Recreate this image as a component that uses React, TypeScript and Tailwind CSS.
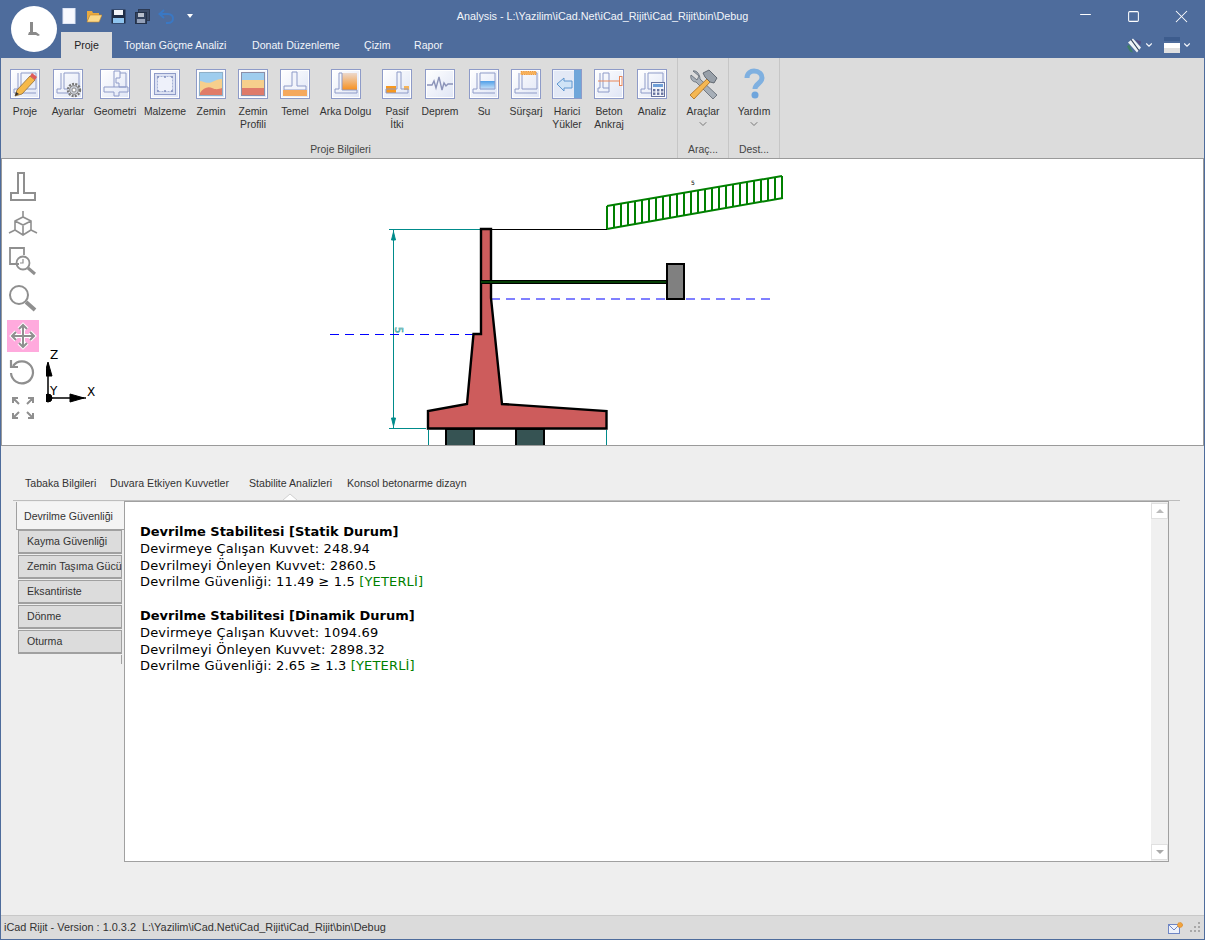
import React from 'react';
import { ChevronDown, Minus, Square, X } from 'lucide-react';

const line = '#8e9bc8';
const Wall = () => <path d="M7 3v16H3v4h22M10 3v16h15M10 3h15v16" fill="none" stroke={line} />;

const RibbonIcon: React.FC<{ children: React.ReactNode; tint?: boolean }> = ({ children, tint }) => (
  <div
    className={
      tint
        ? 'h-[30px] w-[30px] border border-[#8e9bc8] bg-[#e3e9f6] shadow-[inset_0_0_0_1px_#f4f7fd]'
        : 'h-[30px] w-[30px] border border-[#8e9bc8] bg-linear-to-br from-white to-[#dfe5f5] shadow-[inset_0_0_0_1px_#ffffff]'
    }
  >
    <svg viewBox="0 0 28 28" className="h-[28px] w-[28px]">
      {children}
    </svg>
  </div>
);

const ribbonItems = [
  {
    w: 'w-[42px]',
    label: ['Proje'],
    icon: (
      <>
        <Wall />
        <path d="M4 26l2-6L19 6l5 4-13 14z" fill="#f6b94a" stroke="#8b6a3a" strokeWidth="0.8" />
        <path d="M19 6l2-3 5 4-2 3z" fill="#df5a5a" />
        <path d="M4 26l1-4 3 2z" fill="#333" />
      </>
    ),
  },
  {
    w: 'w-[44px]',
    label: ['Ayarlar'],
    icon: (
      <>
        <Wall />
        <circle cx="20" cy="20" r="6" fill="#eef0f6" stroke="#777" strokeWidth="2.4" strokeDasharray="2 1.2" />
        <circle cx="20" cy="20" r="4.4" fill="#c9cdd6" stroke="#777" strokeWidth="0.8" />
        <circle cx="20" cy="20" r="2" fill="#fff" stroke="#777" strokeWidth="0.8" />
      </>
    ),
  },
  {
    w: 'w-[50px]',
    label: ['Geometri'],
    icon: (
      <path
        d="M13 1v16H3v5h10v4h5v-4h9M13 1h6v7h-4v5h3v4h-5M19 3h6v14h-7M18 17h9v5"
        fill="none"
        stroke={line}
      />
    ),
  },
  {
    w: 'w-[50px]',
    label: ['Malzeme'],
    icon: (
      <>
        <rect x="3.5" y="3.5" width="21" height="21" fill="#dbe1f2" stroke={line} />
        <rect x="6.5" y="6.5" width="15" height="15" fill="#eef1fa" stroke="#a7b2d6" strokeDasharray="2 1" />
        {[7, 14, 21].map((x) => (
          <circle key={x} cx={x} cy="7" r="1" fill="#7f8dbd" />
        ))}
        {[7, 14, 21].map((x) => (
          <circle key={x} cx={x} cy="21" r="1" fill="#7f8dbd" />
        ))}
      </>
    ),
  },
  {
    w: 'w-[42px]',
    label: ['Zemin'],
    icon: (
      <>
        <rect x="2.5" y="2.5" width="23" height="23" fill="#9fcdee" stroke="#8fb0c8" />
        <path d="M3 11c5 1 8 3 12 1s7-3 10-3v16H3z" fill="#f6cf8c" />
        <path d="M3 23c3-5 8-7 12-5s7 1 10 0v7H3z" fill="#e07c68" />
      </>
    ),
  },
  {
    w: 'w-[42px]',
    label: ['Zemin', 'Profili'],
    icon: (
      <>
        <rect x="3" y="3" width="22" height="7" fill="#9fcdee" />
        <rect x="3" y="10" width="22" height="8" fill="#f6cf8c" />
        <rect x="3" y="18" width="22" height="7" fill="#df7a6a" />
        <rect x="2.5" y="2.5" width="23" height="23" fill="none" stroke="#8b8fa8" />
      </>
    ),
  },
  {
    w: 'w-[42px]',
    label: ['Temel'],
    icon: (
      <>
        <path d="M11 2v14H3v4h22v-4h-9V2z" fill="#f2f4fb" stroke={line} />
        <rect x="2" y="20" width="24" height="6" fill="#f5a95e" />
      </>
    ),
  },
  {
    w: 'w-[59px]',
    label: ['Arka Dolgu'],
    icon: (
      <>
        <defs>
          <linearGradient id="fillOrange" x1="0" y1="0" x2="0" y2="1">
            <stop offset="0" stopColor="#ecd9cd" />
            <stop offset="1" stopColor="#f7901e" />
          </linearGradient>
        </defs>
        <rect x="10" y="3" width="15" height="17" fill="url(#fillOrange)" />
        <path d="M7 3v16H3v4h22v-3H10V3z" fill="none" stroke={line} />
      </>
    ),
  },
  {
    w: 'w-[44px]',
    label: ['Pasif', 'İtki'],
    icon: (
      <>
        <rect x="3" y="16" width="10" height="7" fill="#f7981f" />
        <rect x="21" y="16" width="5" height="4" fill="#f7b55a" />
        <path d="M14 2v17H3v4h22v-4h-7V2z" fill="none" stroke={line} />
      </>
    ),
  },
  {
    w: 'w-[42px]',
    label: ['Deprem'],
    icon: <path d="M1 15h5l2-4 2 7 3-11 3 13 2-7 2 3 2-2h5" fill="none" stroke="#8b93b8" strokeWidth="1.4" />,
  },
  {
    w: 'w-[46px]',
    label: ['Su'],
    icon: (
      <>
        <defs>
          <linearGradient id="fillWater" x1="0" y1="0" x2="0" y2="1">
            <stop offset="0" stopColor="#4f9fe8" />
            <stop offset="1" stopColor="#d7e9fa" />
          </linearGradient>
        </defs>
        <rect x="10" y="11" width="15" height="9" fill="url(#fillWater)" />
        <Wall />
      </>
    ),
  },
  {
    w: 'w-[38px]',
    label: ['Sürşarj'],
    icon: (
      <>
        <Wall />
        <rect x="9" y="1.5" width="15" height="3" fill="#f7b15a" stroke="#f09a3a" strokeDasharray="1.4 0.8" />
      </>
    ),
  },
  {
    w: 'w-[44px]',
    label: ['Harici', 'Yükler'],
    icon: (
      <>
        <rect x="21" y="0" width="7" height="28" fill="#6fa6da" />
        <path d="M4 14l7-6v3h8v7h-8v3z" fill="#cfe3f6" stroke="#5f96cf" />
      </>
    ),
  },
  {
    w: 'w-[40px]',
    label: ['Beton', 'Ankraj'],
    icon: (
      <>
        <path d="M5 3v15H3v4h11v-4M8 3v15h6M8 3h6v15" fill="none" stroke={line} />
        <path d="M3 11h22" stroke="#e8875a" />
        <rect x="24.5" y="6.5" width="2.5" height="9" fill="#fff" stroke="#e8875a" />
      </>
    ),
  },
  {
    w: 'w-[46px]',
    label: ['Analiz'],
    icon: (
      <>
        <Wall />
        <rect x="13.5" y="12.5" width="13" height="14" fill="#f2f4fa" stroke="#67739f" />
        <rect x="15" y="14" width="10" height="3" fill="#6f9fd8" />
        {[15, 19, 23].map((x) =>
          [19, 22.5].map((y) => <rect key={`${x}-${y}`} x={x} y={y} width="2.4" height="2.4" fill="#67739f" />),
        )}
      </>
    ),
  },
];

const headerTabs = ['Toptan Göçme Analizi', 'Donatı Düzenleme', 'Çizim', 'Rapor'];
const headerTabWidths = ['w-[128px]', 'w-[112px]', 'w-[50px]', 'w-[50px]'];

const resultTabs = [
  { label: 'Tabaka Bilgileri', w: 'w-[85px]' },
  { label: 'Duvara Etkiyen Kuvvetler', w: 'w-[139px]' },
  { label: 'Stabilite Analizleri', w: 'w-[98px]' },
  { label: 'Konsol betonarme dizayn', w: 'w-[140px]' },
];

const sideTabs = ['Kayma Güvenliği', 'Zemin Taşıma Gücü', 'Eksantiriste', 'Dönme', 'Oturma'];

const results = [
  {
    title: 'Devrilme Stabilitesi [Statik Durum]',
    lines: ['Devirmeye Çalışan Kuvvet: 248.94', 'Devrilmeyi Önleyen Kuvvet: 2860.5'],
    safety: 'Devrilme Güvenliği: 11.49 ≥ 1.5',
  },
  {
    title: 'Devrilme Stabilitesi [Dinamik Durum]',
    lines: ['Devirmeye Çalışan Kuvvet: 1094.69', 'Devrilmeyi Önleyen Kuvvet: 2898.32'],
    safety: 'Devrilme Güvenliği: 2.65 ≥ 1.3',
  },
];

const QuickAccess = () => (
  <div className="flex h-[32px] items-center pl-[62px]">
    <svg width="14" height="16" viewBox="0 0 14 16" className="mr-[10px]">
      <rect x="1" y="0.5" width="12" height="15" fill="#f8f9ff" stroke="#dfe6f5" />
    </svg>
    <svg width="16" height="14" viewBox="0 0 16 14" className="mr-[9px]">
      <path d="M1 2h5l1 2h6v2H4L1 12z" fill="#e9a93f" />
      <path d="M1 13l3-7h12l-3 7z" fill="#fbd98a" stroke="#c98a2a" strokeWidth="0.6" />
    </svg>
    <svg width="15" height="15" viewBox="0 0 15 15" className="mr-[9px]">
      <rect x="0.5" y="0.5" width="14" height="14" fill="#1f2d46" />
      <rect x="3" y="1" width="9" height="5" fill="#f2f4f8" />
      <rect x="2" y="9" width="11" height="5" fill="#8fc4ee" />
    </svg>
    <svg width="15" height="15" viewBox="0 0 15 15" className="mr-[8px]">
      <rect x="3.5" y="0.5" width="11" height="11" fill="#3c4c68" stroke="#2c3a54" />
      <rect x="0.5" y="3.5" width="11" height="11" fill="#33435f" stroke="#243249" />
      <rect x="3" y="4" width="6" height="4" fill="#b8bfcb" />
      <rect x="2" y="10" width="8" height="4" fill="#93a0b8" />
    </svg>
    <svg width="17" height="15" viewBox="0 0 17 15" className="mr-[12px]">
      <path d="M6 1L1.5 5 6 9M2 5h8c3 0 5 2 5 4.500S13 14 10 14H8" fill="none" stroke="#3a78c4" strokeWidth="2" />
    </svg>
    <svg width="6" height="4" viewBox="0 0 6 4">
      <path d="M0 0h6L3 4z" fill="#fff" />
    </svg>
  </div>
);

const Header = () => (
  <header className="relative h-[58px] shrink-0 text-[10.6px] text-[#f2f5fa]">
    <div className="absolute left-[11px] top-[6px] flex h-[46px] w-[46px] items-center justify-center rounded-full bg-white">
      <svg width="14" height="16" viewBox="0 0 14 16">
        <path d="M3 1h3v10h3l4 3-2 1-2-1H1l1-3h1z" fill="#8a8a8a" />
      </svg>
    </div>
    <div className="grid h-[32px] grid-cols-[1fr_auto_1fr] items-center">
      <QuickAccess />
      <span className="pt-[1px] text-[10.8px]">Analysis - L:\Yazilim\iCad.Net\iCad_Rijit\iCad_Rijit\bin\Debug</span>
      <div className="flex justify-end text-white">
        <div className="flex w-[48px] justify-center">
          <Minus size={17} strokeWidth={1.4} />
        </div>
        <div className="flex w-[48px] items-center justify-center">
          <Square size={13} strokeWidth={1.9} />
        </div>
        <div className="flex w-[48px] justify-center">
          <X size={21} strokeWidth={1.2} />
        </div>
      </div>
    </div>
    <div className="flex h-[26px] items-stretch">
      <div className="ml-[61px] flex w-[51px] items-center justify-center bg-[#dcdcdc] pt-[1px] text-[#222]">Proje</div>
      <div className="flex flex-1 items-center pl-[12px] pt-[1px]">
        {headerTabs.map((t, i) => (
          <span key={t} className={headerTabWidths[i]}>
            {t}
          </span>
        ))}
      </div>
      <div className="flex items-center pr-[13px]">
        <svg width="16" height="17" viewBox="0 0 16 16">
          <path d="M2 5l5-4 8 9-4 5z" fill="#eef1f6" />
          <path d="M9 2l5 6 1-4z" fill="#544a80" />
          <path d="M1 9l3 5 3 1-4-8z" fill="#3f7f66" />
          <path d="M5 2l8 11" stroke="#2f3c58" strokeWidth="1.2" />
        </svg>
        <ChevronDown size={10} strokeWidth={2.6} className="ml-[2px] mr-[10px]" />
        <div className="mr-[2px] flex h-[16px] w-[16px] flex-col">
          <div className="h-[4px] bg-[#3d5c8d]" />
          <div className="h-[2px]" />
          <div className="h-[5px] bg-white" />
          <div className="h-[5px] bg-[#e0e0e0]" />
        </div>
        <ChevronDown size={10} strokeWidth={2.6} />
      </div>
    </div>
  </header>
);

const LargeAction: React.FC<{ label: string; group: string; width: string; children: React.ReactNode }> = ({
  label,
  group,
  width,
  children,
}) => (
  <div className={`${width} flex flex-col items-center border-r border-[#c6c6c6] pt-[10px]`}>
    <svg width="32" height="32" viewBox="0 0 32 32">
      {children}
    </svg>
    <span className="mt-[5px] leading-[13px]">{label}</span>
    <ChevronDown size={12} strokeWidth={2} className="text-[#777]" />
    <span className="mt-auto leading-[17px] text-[#444]">{group}</span>
  </div>
);

const Ribbon = () => (
  <section className="flex h-[100px] shrink-0 bg-[#dcdcdc] text-[10.4px] text-[#333]">
    <div className="flex w-[677px] flex-col border-r border-[#c6c6c6] pl-[3px]">
      <div className="flex flex-1 pt-[11px]">
        {ribbonItems.map((item) => (
          <div key={item.label.join(' ')} className={`${item.w} flex flex-col items-center`}>
            <RibbonIcon tint={item.label[0] === 'Harici'}>{item.icon}</RibbonIcon>
            <div className="mt-[6px] text-center leading-[13px]">
              {item.label.map((l) => (
                <div key={l} className="whitespace-nowrap">
                  {l}
                </div>
              ))}
            </div>
          </div>
        ))}
      </div>
      <div className="text-center leading-[17px] text-[#444]">Proje Bilgileri</div>
    </div>
    <LargeAction label="Araçlar" group="Araç..." width="w-[51px]">
      <path d="M6 3l6 5-2 4-6-5c-1 3 1 7 5 7l17 17 4-4L13 11c0-4-3-9-7-8z" fill="#a7afb8" stroke="#5d6670" strokeWidth="0.8" />
      <path d="M3 27l18-17 3 3L7 31z" fill="#f5b752" stroke="#a86c20" strokeWidth="0.8" />
      <path d="M16 5l6-3 8 8-3 5-4-1-5-5z" fill="#98a0a9" stroke="#4e565f" strokeWidth="0.8" />
    </LargeAction>
    <LargeAction label="Yardım" group="Dest..." width="w-[51px]">
      <path d="M9 10c0-5 4-7 7-7 5 0 8 3 8 7 0 5-7 6-7 11" fill="none" stroke="#7fb0e0" strokeWidth="5" />
      <circle cx="17" cy="27" r="3.500" fill="#6fa5dc" />
    </LargeAction>
  </section>
);

const tool = 'fill-none stroke-[#8f8f8f]';

const CanvasTools = () => (
  <div className="flex w-[44px] shrink-0 flex-col items-center pr-[2px] pt-[12px]">
    <svg width="28" height="32" viewBox="0 0 28 32" className={tool} strokeWidth="2">
      <path d="M9 2h6v20h11v7H2v-7h7z" />
    </svg>
    <svg width="30" height="30" viewBox="0 0 30 30" className={`${tool} mt-[7px]`} strokeWidth="1.6">
      <path d="M15 1v6M7 11l8-4 8 4v9l-8 5-8-5zM7 11l8 4 8-4M15 15v10M7 20l-6 3M23 20l6 3" />
    </svg>
    <svg width="30" height="30" viewBox="0 0 30 30" className={`${tool} mt-[6px]`} strokeWidth="1.8">
      <path d="M11 18H2V2h14v7" />
      <circle cx="15" cy="17" r="6.500" />
      <path d="M15 13v4h-3" strokeWidth="1.2" />
      <path d="M20 22l7 6" strokeWidth="3" />
    </svg>
    <svg width="30" height="30" viewBox="0 0 30 30" className={`${tool} mt-[7px]`} strokeWidth="2">
      <circle cx="11" cy="12" r="9" />
      <path d="M18 19l9 8" strokeWidth="4" />
    </svg>
    <div className="mt-[7px] flex h-[32px] w-[32px] items-center justify-center bg-[#ffaadd]">
      <svg width="28" height="28" viewBox="0 0 28 28" className={tool} strokeWidth="2">
        <path d="M14 3v22M3 14h22M10 7l4-4 4 4M10 21l4 4 4-4M7 10l-4 4 4 4M21 10l4 4-4 4" stroke="#fff" strokeWidth="4" />
        <path d="M14 3v22M3 14h22M10 7l4-4 4 4M10 21l4 4 4-4M7 10l-4 4 4 4M21 10l4 4-4 4" />
      </svg>
    </div>
    <svg width="30" height="30" viewBox="0 0 30 30" className={`${tool} mt-[6px]`} strokeWidth="2.2">
      <path d="M5 8a11 11 0 1 1-2 7" />
      <path d="M3 2v7h7" />
    </svg>
    <svg width="26" height="26" viewBox="0 0 26 26" className={`${tool} mt-[7px]`} strokeWidth="2">
      <path d="M3 3l6 6M3 8V3h5M23 3l-6 6M23 8V3h-5M3 23l6-6M3 18v5h5M23 23l-6-6M23 18v5h-5" />
    </svg>
  </div>
);

// surcharge load, evenly spaced down the slope
const loadBars = Array.from({ length: 26 }, (_, i) => {
  const t = i / 25;
  return { x: 607 + t * 175, top: 206 - t * 30, bottom: 229 - t * 31 };
});

const Drawing = () => (
  // drawn in page coordinates, so the viewBox starts where the svg sits
  <svg viewBox="46 159 1157 286" className="h-[286px] w-[1157px]">
    <g stroke="#008b8b" fill="#008b8b">
      <path d="M389 229.500h92M389 428.500h37M393.500 229v199M428.500 430v15M606.500 430v15" fill="none" />
      <path d="M393.500 232l-2 8h4zM393.500 426l-2-8h4z" />
      <text x="398" y="330" fontSize="10" fill="none" strokeWidth="0.5" transform="rotate(90 398 327)" fontFamily="DejaVu Sans, sans-serif">
        5
      </text>
    </g>
    <path d="M491 229.500h116" stroke="#000" />
    <path d="M491 299h279M330 334.500h143" stroke="#0000ff" strokeDasharray="9 6" />
    <path
      d="M481 229h10v69l11 106 104.500 7v17.500H428V411l39-7 6.500-70H481z"
      fill="#cd5c5c"
      stroke="#000"
      strokeWidth="2.400"
    />
    <rect x="446" y="429" width="28" height="18" fill="#365353" stroke="#000" strokeWidth="2" />
    <rect x="516" y="429" width="28" height="18" fill="#365353" stroke="#000" strokeWidth="2" />
    <path d="M481 282h186" stroke="#000" strokeWidth="4" />
    <path d="M481 282h186" stroke="#0a7a0a" strokeWidth="1" />
    <rect x="667" y="264" width="17" height="35" fill="#808080" stroke="#000" strokeWidth="2" />
    <g stroke="#008000" strokeWidth="2" fill="none">
      <path d="M607 229L783 198M607 206L782 176" />
      {loadBars.map((b) => (
        <path key={b.x} d={`M${b.x} ${b.top}V${b.bottom}`} />
      ))}
    </g>
    <text x="691" y="185" fontSize="6" fill="#000" fontFamily="DejaVu Sans, sans-serif">
      5
    </text>
    <g stroke="#000" fill="#000">
      <path d="M48 398V363M48 398h38" strokeWidth="1.500" />
      <path d="M48 362l-4 14h8zM84 398l-14-4v8z" />
      <circle cx="48" cy="398" r="4" />
    </g>
    <g fontSize="12" fontFamily="DejaVu Sans, sans-serif" fill="#000">
      <text x="50" y="359">Z</text>
      <text x="50" y="395">Y</text>
      <text x="87" y="396">X</text>
    </g>
  </svg>
);

const ResultPanel = () => (
  <div className="flex h-[361px] w-[1045px] border border-[#a0a0a0] bg-white">
    <div className="flex-1 pl-[15px] pt-[22px] font-['DejaVu_Sans',sans-serif] text-[13px] leading-[16.8px] tracking-[0.16px] text-black">
      {results.map((r) => (
        <div key={r.title} className="mb-[16.8px]">
          <div className="font-bold tracking-normal">{r.title}</div>
          {r.lines.map((l) => (
            <div key={l}>{l}</div>
          ))}
          <div>
            {r.safety} <span className="text-[#008000]">[YETERLİ]</span>
          </div>
        </div>
      ))}
    </div>
    <div className="flex w-[17px] flex-col justify-between bg-[#f0f0f0] py-[1px]">
      <div className="flex h-[16px] items-center justify-center border border-[#e0e0e0] bg-white">
        <div className="h-0 w-0 border-x-[4px] border-b-[4px] border-x-transparent border-b-[#bbb]" />
      </div>
      <div className="flex h-[16px] items-center justify-center border border-[#e0e0e0] bg-white">
        <div className="h-0 w-0 border-x-[4px] border-t-[4px] border-x-transparent border-t-[#aaa]" />
      </div>
    </div>
  </div>
);

const Results = () => (
  <section className="flex-1 bg-[#eeeeee] pl-[12px] pr-[24px] pt-[29px] text-[10.6px] text-[#333]">
    <div className="flex h-[26px] items-center border-b border-[#bdbdbd] pb-[7px] pl-[12px]">
      {resultTabs.map((t) => (
        <div key={t.label} className={`${t.w} relative whitespace-nowrap`}>
          {t.label}
          {t.label === 'Stabilite Analizleri' && (
            <svg width="14" height="7" viewBox="0 0 14 7" className="absolute bottom-[-8px] left-[34px]">
              <path d="M0 7l7-6 7 6" fill="#fff" stroke="#cfcfcf" />
            </svg>
          )}
        </div>
      ))}
    </div>
    <div className="flex pl-[3px]">
      <div className="w-[108px] pt-[1px]">
        <div className="flex h-[28px] items-center border-b border-l border-[#a0a0a0] bg-[#f4f4f4] pl-[7px] pt-[2px]">
          Devrilme Güvenliği
        </div>
        {sideTabs.map((t) => (
          <div
            key={t}
            className="mb-[1px] ml-[2px] flex h-[24px] w-[104px] items-center whitespace-nowrap border border-b-2 border-[#a0a0a0] bg-[#dcdcdc] pl-[8px]"
          >
            {t}
          </div>
        ))}
        <div className="ml-[105px] h-[9px] w-[1px] bg-[#a0a0a0]" />
      </div>
      <ResultPanel />
    </div>
  </section>
);

const StatusBar = () => (
  <footer className="flex h-[24px] shrink-0 items-center border-t border-[#c8c8c8] bg-[#dbdbdb] pl-[3px] pr-[3px] text-[10.9px] text-[#333]">
    <span className="flex-1 whitespace-pre">{'iCad Rijit - Version : 1.0.3.2  L:\\Yazilim\\iCad.Net\\iCad_Rijit\\iCad_Rijit\\bin\\Debug'}</span>
    <svg width="16" height="14" viewBox="0 0 16 14" className="mr-[6px]">
      <rect x="0.5" y="3.500" width="11" height="9" fill="#eef2fb" stroke="#6f86c4" />
      <path d="M1 4l5 5 5-5" fill="none" stroke="#6f86c4" />
      <circle cx="12" cy="4" r="2.500" fill="#f2a33c" stroke="#d98a2a" strokeDasharray="1 0.6" />
    </svg>
    <svg width="11" height="11" viewBox="0 0 11 11" fill="#a8a8a8">
      <rect x="8" y="0" width="2" height="2" />
      <rect x="4" y="4" width="2" height="2" />
      <rect x="8" y="4" width="2" height="2" />
      <rect x="0" y="8" width="2" height="2" />
      <rect x="4" y="8" width="2" height="2" />
      <rect x="8" y="8" width="2" height="2" />
    </svg>
  </footer>
);

export default function App() {
  return (
    <div className="flex h-[940px] w-[1205px] flex-col overflow-hidden bg-[#4e6c9c] font-['Liberation_Sans',sans-serif]">
      <Header />
      <main className="mx-[1px] mb-[1px] flex flex-1 flex-col">
        <Ribbon />
        <div className="flex h-[288px] shrink-0 border border-[#9a9a9a] bg-white">
          <CanvasTools />
          <Drawing />
        </div>
        <Results />
        <StatusBar />
      </main>
    </div>
  );
}
